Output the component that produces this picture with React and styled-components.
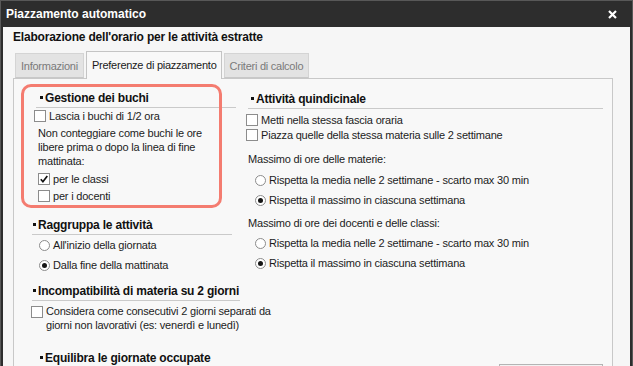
import React from 'react';
import styled, {createGlobalStyle} from 'styled-components';

const GlobalStyle = createGlobalStyle`
  html, body {
    margin: 0;
    padding: 0;
    overflow: hidden;
    background: #2d2d2d;
  }
  body {
    font-family: "Liberation Sans", Arial, sans-serif;
    color: #1c1c1c;
  }
`

const Checkbox = ({checked}) => (
	<CheckBox>
		{checked &&
			<svg width="10" height="10" viewBox="0 0 10 10">
				<path d="M1.8 5.3 L3.9 7.7 L8.3 1.9" fill="none" stroke="#111" strokeWidth="1.7" />
			</svg>
		}
	</CheckBox>
)

const Radio = ({checked}) => (
	<RadioDot $checked={checked} />
)

const Heading = ({children, $ml, $pad, $width, $mt}) => (
	<SectionHeading $ml={$ml} $pad={$pad} $width={$width} $mt={$mt}>
		<Bullet />
		{children}
	</SectionHeading>
)

const App = () => {
	return(
		<>
			<GlobalStyle />
			<Window>
				<TitleBar>
					<span>Piazzamento automatico</span>
					<svg width="9" height="9" viewBox="0 0 9 9">
						<path d="M1 1 L8 8 M8 1 L1 8" stroke="#fff" strokeWidth="2.2" />
					</svg>
				</TitleBar>
				<Body>
					<Subtitle>Elaborazione dell'orario per le attività estratte</Subtitle>
					<Tabs>
						<Tab>Informazioni</Tab>
						<Tab $active>Preferenze di piazzamento</Tab>
						<Tab>Criteri di calcolo</Tab>
					</Tabs>
					<Panel>
						<Highlight />
						<Column>
							<Heading $ml={6} $pad={4} $width={200}>Gestione dei buchi</Heading>
							<Row $ml={4} $h={16}>
								<Checkbox />
								<Label>Lascia i buchi di 1/2 ora</Label>
							</Row>
							<Para $ml={8} $mt={2} $lh={14}>
								Non conteggiare come buchi le ore<br />
								libere prima o dopo la linea di fine<br />
								mattinata:
							</Para>
							<Row $ml={8} $mt={2} $h={17}>
								<Checkbox checked />
								<Label>per le classi</Label>
							</Row>
							<Row $ml={8} $h={17}>
								<Checkbox />
								<Label>per i docenti</Label>
							</Row>

							<Heading $ml={2} $pad={1} $width={200} $mt={11}>Raggruppa le attività</Heading>
							<Row $ml={9} $h={20}>
								<Radio />
								<Label>All'inizio della giornata</Label>
							</Row>
							<Row $ml={9} $h={20}>
								<Radio checked />
								<Label>Dalla fine della mattinata</Label>
							</Row>

							<Heading $ml={2} $pad={1} $width={208} $mt={6}>Incompatibilità di materia su 2 giorni</Heading>
							<Row $ml={1} $mt={3} $top>
								<Checkbox />
								<Label $lh={14}>
									Considera come consecutivi 2 giorni separati da<br />
									giorni non lavorativi (es: venerdì e lunedì)
								</Label>
							</Row>

							<Heading $ml={6} $pad={4} $width={200} $mt={16}>Equilibra le giornate occupate</Heading>
						</Column>

						<Column $mt={1}>
							<Heading $ml={2} $pad={3}>Attività quindicinale</Heading>
							<Row $mt={3} $h={15}>
								<Checkbox />
								<Label>Metti nella stessa fascia oraria</Label>
							</Row>
							<Row $h={15}>
								<Checkbox />
								<Label>Piazza quelle della stessa materia sulle 2 settimane</Label>
							</Row>
							<Para $ml={2} $mt={9} $lh={16}>Massimo di ore delle materie:</Para>
							<Row $ml={9} $mt={3} $h={20}>
								<Radio />
								<Label>Rispetta la media nelle 2 settimane - scarto max 30 min</Label>
							</Row>
							<Row $ml={9} $h={20}>
								<Radio checked />
								<Label>Rispetta il massimo in ciascuna settimana</Label>
							</Row>
							<Para $ml={2} $mt={5} $lh={16}>Massimo di ore dei docenti e delle classi:</Para>
							<Row $ml={9} $mt={2} $h={20}>
								<Radio />
								<Label>Rispetta la media nelle 2 settimane - scarto max 30 min</Label>
							</Row>
							<Row $ml={9} $h={20}>
								<Radio checked />
								<Label>Rispetta il massimo in ciascuna settimana</Label>
							</Row>
							<ButtonStub />
						</Column>
					</Panel>
				</Body>
			</Window>
		</>
	)
}

export default App;

const Window = styled.div`
  width: 633px;
  height: 420px;
  box-sizing: border-box;
  border: 1px solid #585858;
  background: #2d2d2d;
  display: flex;
  flex-direction: column;
  overflow: hidden;
`

const TitleBar = styled.div`
  height: 26px;
  flex-shrink: 0;
  display: flex;
  align-items: center;
  justify-content: space-between;
  padding: 0 15px 0 5px;
  color: #fff;
  font-weight: bold;
  font-size: 12px;
  svg {
    display: block;
  }
`

const Body = styled.div`
  flex: 1;
  margin: 0 2px;
  background: #f6f6f6;
  padding: 2px 17px 0 10px;
  display: flex;
  flex-direction: column;
  overflow: hidden;
`

const Subtitle = styled.div`
  height: 16px;
  line-height: 16px;
  font-size: 12px;
  font-weight: bold;
  letter-spacing: -0.2px;
  color: #111;
`

const Tabs = styled.div`
  margin-top: 6px;
  height: 27px;
  display: flex;
  align-items: flex-end;
  gap: 2px;
  padding-left: 2px;
  position: relative;
  z-index: 1;
`

const Tab = styled.div`
  box-sizing: border-box;
  height: ${p => p.$active ? '28px' : '25px'};
  margin-bottom: ${p => p.$active ? '-1px' : '0'};
  padding: ${p => p.$active ? '0 4px 1px 5px' : '0 5px'};
  display: flex;
  align-items: center;
  font-size: 11px;
  letter-spacing: -0.25px;
  background: ${p => p.$active ? '#f8f8f8' : '#e3e3e3'};
  color: ${p => p.$active ? '#1a1a1a' : '#7a7a7a'};
  border: 1px solid ${p => p.$active ? '#c4c4c4' : '#d4d4d4'};
  border-bottom: ${p => p.$active ? 'none' : '1px solid #c8c8c8'};
`

const Panel = styled.div`
  flex: 1;
  position: relative;
  background: #f8f8f8;
  border: 1px solid #c8c8c8;
  padding: 9px 9px 0 16px;
  display: grid;
  grid-template-columns: 212px 1fr;
  column-gap: 4px;
  align-items: start;
`

const Highlight = styled.div`
  position: absolute;
  left: 7px;
  top: 5px;
  width: 201px;
  height: 124px;
  box-sizing: border-box;
  border: 3px solid #f47c70;
  border-radius: 10px;
  pointer-events: none;
`

const Column = styled.div`
  display: flex;
  flex-direction: column;
  margin-top: ${p => p.$mt || 0}px;
`

const SectionHeading = styled.div`
  box-sizing: border-box;
  height: 20px;
  margin-left: ${p => p.$ml || 0}px;
  margin-top: ${p => p.$mt || 0}px;
  padding-left: ${p => p.$pad || 0}px;
  width: ${p => p.$width ? `${p.$width}px` : 'auto'};
  border-bottom: 1px solid #cacaca;
  display: flex;
  align-items: center;
  font-size: 12px;
  font-weight: bold;
  letter-spacing: -0.2px;
  color: #111;
  white-space: nowrap;
`

const Bullet = styled.span`
  width: 3px;
  height: 3px;
  background: #111;
  margin-right: 2px;
  position: relative;
  top: 0;
  flex-shrink: 0;
`

const Row = styled.div`
  display: flex;
  align-items: ${p => p.$top ? 'flex-start' : 'center'};
  gap: 3px;
  height: ${p => p.$h ? `${p.$h}px` : 'auto'};
  margin-left: ${p => p.$ml || 0}px;
  margin-top: ${p => p.$mt || 0}px;
  & > span:first-child {
    margin-top: ${p => p.$top ? '2px' : '0'};
  }
`

const Label = styled.div`
  font-size: 11px;
  letter-spacing: -0.2px;
  line-height: ${p => p.$lh || 14}px;
  white-space: nowrap;
`

const Para = styled.div`
  font-size: 11px;
  letter-spacing: -0.2px;
  line-height: ${p => p.$lh}px;
  margin-left: ${p => p.$ml || 0}px;
  margin-top: ${p => p.$mt || 0}px;
  white-space: nowrap;
`

const CheckBox = styled.span`
  box-sizing: border-box;
  width: 12px;
  height: 12px;
  flex-shrink: 0;
  border: 1px solid #8c8c8c;
  background: #fff;
  display: flex;
  align-items: center;
  justify-content: center;
`

const RadioDot = styled.span`
  box-sizing: border-box;
  width: 11px;
  height: 11px;
  flex-shrink: 0;
  border-radius: 50%;
  border: 1px solid #8c8c8c;
  background: #fff;
  position: relative;
  &::after {
    content: '';
    display: ${p => p.$checked ? 'block' : 'none'};
    position: absolute;
    left: 2px;
    top: 2px;
    width: 5px;
    height: 5px;
    border-radius: 50%;
    background: #151515;
  }
`

const ButtonStub = styled.div`
  align-self: flex-end;
  margin-top: 91px;
  width: 104px;
  height: 24px;
  box-sizing: border-box;
  border: 1px solid #b4b4b4;
  background: #f2f2f2;
`
